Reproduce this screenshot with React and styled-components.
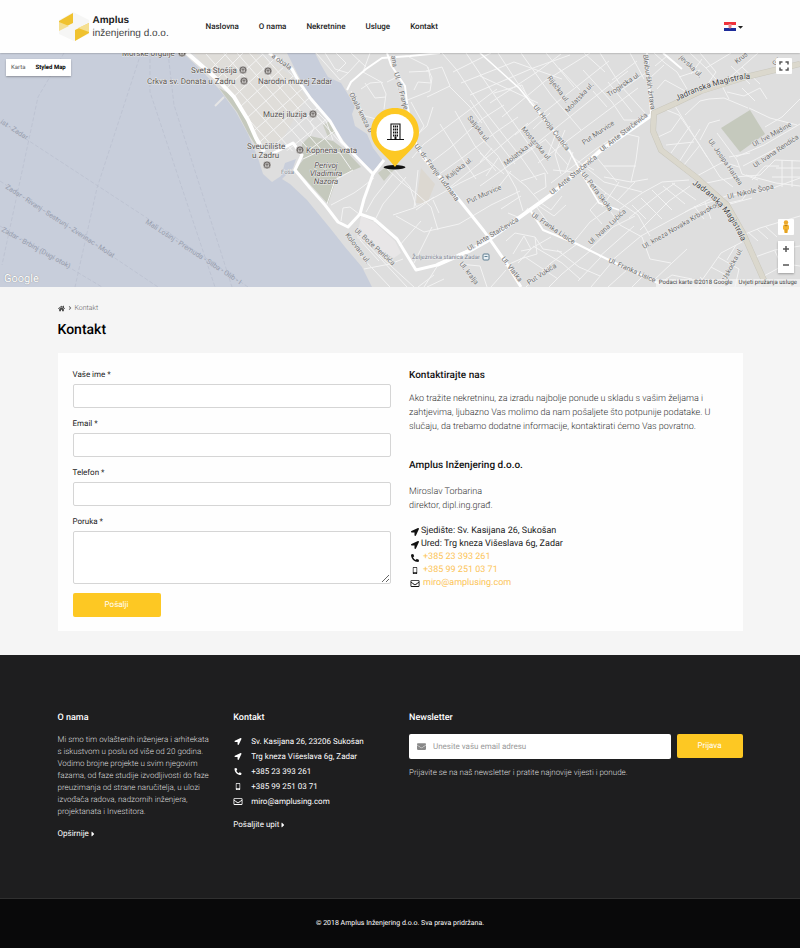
import React from "react";
import styled, { createGlobalStyle } from "styled-components";
import {
    FaAngleRight,
    FaCaretDown,
    FaCaretRight,
    FaEnvelope,
    FaHome,
    FaLocationArrow,
    FaMobileAlt,
    FaPhoneAlt,
    FaRegEnvelope,
} from "react-icons/fa";

const navItems = ["Naslovna", "O nama", "Nekretnine", "Usluge", "Kontakt"];

const fields = [
    { id: "name", label: "Vaše ime *", type: "text" },
    { id: "email", label: "Email *", type: "email" },
    { id: "phone", label: "Telefon *", type: "tel" },
];

const waterLabels = [
    [0, 123, 33, "ist - Zadar"],
    [5, 188, 33, "Zadar - Rivanj - Sestrunj - Zverinac - Molat"],
    [1, 231, 29, "Zadar - Brbinj (Dugi otok)"],
    [145, 223, 33, "Mali Lošinj - Premuda - Silba - Olib - I"],
];

const streetLabels = [
    [271, 57, 35, "a obala"],
    [349, 94, 63, "Obala kneza b"],
    [391, 56, 80, "ana"],
    [394, 73, 75, "Ul. dr. Franje"],
    [414, 146, 53, "Ul. dr. Franje Tuđmana"],
    [448, 180, -38, "Kaljska ul."],
    [467, 118, 52, "Saljska ul."],
    [468, 204, -24, "Put Murvice"],
    [469, 251, -31, "Ul. Ante Starčevića"],
    [354, 231, 42, "Ul. Bože Peričića"],
    [345, 235, 53, "Kolovare ul."],
    [459, 264, 52, "Ul. kralja"],
    [547, 78, 53, "Riječka ul."],
    [568, 113, -47, "Molatska ul."],
    [609, 97, -34, "Trogirska ul."],
    [643, 55, 82, "Bleiburških žrtava"],
    [533, 107, 53, "Ul. Hrvoja Ćustića"],
    [521, 129, 50, "Mostarska ul."],
    [584, 145, -34, "Put Murvice"],
    [602, 152, -38, "Ul. Ante Starčevića"],
    [506, 166, -38, "Molatska ul."],
    [552, 195, -39, "Ul. Ante Starčevića"],
    [581, 174, 53, "Ul. Petra Skoka"],
    [591, 245, -43, "Ul. Ivana Lučića"],
    [531, 216, 34, "Ul. Franka Lisice"],
    [608, 262, 24, "Ul. Franka Lisice"],
    [644, 249, -30, "Ul. kneza Novaka Krbavskog"],
    [708, 141, 55, "Ul. Josipa Hatzea"],
    [754, 147, -29, "Ul. Ive Mašine"],
    [755, 168, -34, "Ul. Ivana Rendića"],
    [728, 199, -13, "Ul. Nikole Šopa"],
    [529, 285, -33, "Put Vukića"],
    [501, 259, 52, "Ul. Vlatka"],
    [726, 281, -62, "Uskočka ul."],
    [679, 58, 44, "jevska ul."],
    [737, 64, -38, "Kruš"],
    [776, 66, -60, "Ga"],
];

const places = [
    [122, 56, "Morske orgulje"],
    [191, 73, "Sveta Stošija"],
    [147, 84, "Crkva sv. Donata u Zadru"],
    [258, 84, "Narodni muzej Zadar"],
    [263, 117, "Muzej iluzija"],
    [247, 149, "Sveučilište"],
    [252, 158, "u Zadru"],
    [306, 153, "Kopnena vrata"],
];

const markers = [[182, 53], [243, 70], [244, 81], [268, 71], [313, 114], [300, 150], [267, 165]];

const CityMap = () => (
    <MapSvg viewBox="0 53 800 234" preserveAspectRatio="xMidYMid slice" role="img" aria-label="Zadar">
        <defs>
            <clipPath id="oldTown">
                <path d="M190 53H262L291 73L310 100L330 124L343 146L300 152L262 148L254 128L236 98L213 77Z" />
            </clipPath>
            <path id="magistralaNorth" d="M677 101Q706 86 744 79H790" />
            <path id="magistralaSouth" d="M692 184Q724 204 739 236L760 280" />
        </defs>

        <rect y="53" width="800" height="234" fill="#c8cedb" />
        <path
            d="M183 53L203 72L219 89L236 112L248 134L258 158L263 174L272 182L281 176L285 163L296 159L293 168L282 179L290 184L307 200L330 228L345 247L362 267L372 287H800V53H315L321 65L328 77L341 83L355 106L352 114L355 126L367 134L373 148L383 161L373 171L353 154L337 131L323 111L308 93L297 73L287 53Z"
            fill="#dedede"
        />
        <path d="M194 53H256L292 76L306 98L282 140L263 148L254 128L236 98L213 77Z" fill="#dfddd9" />
        <path d="M219 88L228 93L244 111L253 131L258 149L249 135L237 112Z" fill="#c5c9bd" />
        <path d="M302 144L310 136L333 141L345 150L361 167L337 177L328 204L296 169L303 160Z" fill="#c5c9bd" />
        <path d="M323 125L330 121L336 132L328 137Z M378 173L387 166L400 164L390 174L384 181Z" fill="#c9ccc1" />
        <path d="M721 128L750 110L765 134L740 152Z" fill="#c5c9bd" />
        <path d="M421 168L435 184L427 204L416 203Z" fill="#dcd8d1" />
        <path d="M361 216L374 222L395 241L401 253L394 258L357 238Z" fill="#e8e6e7" />

        <g fill="none" stroke="#b9bfce" strokeWidth="0.700" strokeDasharray="4 2">
            <path d="M64 53L38 97L2 265M141 53L97 188L75 287M150 53V92L215 287M168 53L174 105L232 287" />
            <path d="M0 122L147 218L248 287M0 181L158 287M0 226L102 287" />
        </g>

        <g fill="none" stroke="#f3f3f3" strokeWidth="1">
            <g clipPath="url(#oldTown)">
                <path d="M190 90L250 30M195 101L265 31M203 110L278 40M210 119L287 47M217 128L297 55M225 138L302 68M233 149L310 82M244 156L317 91M255 162L324 102M269 165L333 114M284 169L340 127" />
                <path d="M214 42L318 160M224 38L330 160M238 40L340 156M252 42L345 148M206 54L304 164M198 62L288 164M262 42L346 134" />
            </g>
            <path d="M310 136L314 128L310 122L318 113L326 121L333 140M303 159L324 149L340 153L351 169M327 204L335 180L353 170M331 205L354 193L361 188L374 178" />
            <path d="M341 221L343 208L350 207L359 214M366 212L374 198L393 174M374 222L383 204L406 177M416 206L410 187L393 168M438 230L431 207L417 194L400 181L384 166" />
            <path d="M393 215L414 208L437 196L460 183L491 168M396 216L424 232L459 224L491 205L520 191M414 208L418 170M434 197L416 210M433 200L439 213M421 221L399 246M432 227L414 263" />
            <path d="M357 252L390 287M367 244L407 287M379 255L414 287M360 240L379 261M364 269L390 264L403 259M424 287L438 265M427 287L444 279M459 264L480 266L487 287M418 287L434 275" />
            <path d="M316 53L340 80L348 73L360 60M325 53L335 69L348 73M351 53L366 67M336 53L346 63L337 72M361 89L370 83L381 82L386 94L384 109M351 91L365 116L376 119M365 83L375 98L386 97" />
            <path d="M370 53L363 72L383 83M397 77L387 82M405 101L430 91L432 78L427 66L409 57M409 72L430 71M414 90L418 82L431 83L428 67M427 97L450 86L442 67L426 71M411 102L424 126L417 136M433 107L427 126L418 134" />
            <path d="M412 158L424 144L468 111L497 89M420 148L407 143M429 164L450 148L482 119L504 105M438 175L462 158L496 132L518 117M449 188L486 158L528 123M440 124L461 157L476 179M455 111L475 146L496 171M470 100L494 137L515 164M449 86L470 107L482 123" />
            <path d="M442 53L456 69L480 105L523 160L537 180M466 53L493 93L536 155L548 174M498 53L517 82L534 104L570 150L583 176M521 53L551 95L581 130M546 53L574 87M453 72L491 53M461 83L514 62L562 79M470 95L533 68L570 55" />
            <path d="M480 76L538 103M494 93L522 85L530 103M490 103L537 72L561 54M502 117L545 81L590 53M515 135L561 99L609 61M527 151L592 99L628 71M538 163L575 135L638 88M551 183L596 149L646 116" />
            <path d="M550 113L533 129M583 70L612 102L624 120H646M600 53L621 86L646 114M630 53L644 79M593 91L607 107M608 82L632 112M580 90L559 68M605 72L584 53M612 80L637 61M620 91L650 70" />
            <path d="M480 137L498 156L506 170L526 186L541 203M492 148L480 162M498 158L486 176M511 171L496 190M480 186L508 166L546 139M504 174L480 153M521 181L545 173L546 187L534 194M553 170L574 172L583 164L594 170" />
            <path d="M545 139L568 165M556 133L547 158M565 130L555 154L561 174M573 152L565 173M506 170L516 188L523 211M521 196L501 209M528 208L520 218L508 213M536 204L554 216L566 205M536 206L549 224M541 203L551 210L562 196" />
            <path d="M603 148L623 133L639 137L636 160L631 182M604 166H636M604 177L631 182L648 179M574 158L604 182L642 192M581 173L606 193L638 215L650 236M598 159L617 182M606 193L590 210L602 224M619 182L602 207M635 182L617 201" />
            <path d="M620 209L642 193L662 182L689 180M629 218L658 195L675 183M640 230L669 201L690 186M632 205L646 219M641 198L662 219M652 190L672 210M663 186L685 204M672 183L696 200M611 212L620 225L642 237L650 259" />
            <path d="M572 244L590 222L607 210M588 251L613 227L635 216M599 257L634 226M610 262L641 236L691 209L729 195M551 237L532 248L518 263M577 244L551 263L526 287M590 251L562 274L549 287M601 257L578 281M612 262L591 287M628 269L608 287M643 276L632 287" />
            <path d="M506 241L515 233L535 237L543 249L562 252M513 254L524 236L531 249L521 251M535 237L537 254L520 259M491 287L506 270M505 266L525 257L558 279M533 246L562 263L580 279M557 250L579 267L600 276" />
            <path d="M664 109L679 115L699 144L720 177L733 187M675 106L707 157M685 115L700 101L709 99L724 98L748 108M681 117L671 131L658 137M690 126L671 153M700 129L679 162M700 145L684 165M694 142L666 145M720 120L709 123L700 140" />
            <path d="M690 53L706 68L731 53M700 53L716 72L705 88M706 68L722 86L729 99M722 84L742 67L758 53M742 67L760 84M731 66L750 84M679 77L700 70M687 89L677 72L665 63L654 53M664 65L650 78M657 89L665 80L685 91" />
            <path d="M655 66L667 56M702 59L691 74M727 92L744 96L760 88L767 99M742 88L755 101M749 108L770 118L797 125M765 127L782 117L800 99M717 133L737 160L742 174L758 180M736 157L764 145L800 124M743 166L781 146M729 157L750 153" />
            <path d="M697 176L723 162L739 167M702 184L735 177L760 175L775 160L800 161M746 175L776 183L800 186M776 168H800M772 177H800M782 160V187M792 160V187M752 180L765 166L779 166M730 195L765 191L800 178M751 188L742 200L724 204" />
            <path d="M685 212L710 199M694 206L704 219M705 202L711 219M730 204L752 198M743 235L760 228L800 216M748 232L758 241M757 229L768 239M765 226L777 237M742 242L721 253L712 266L697 287M736 245L727 260M718 257L739 269L735 287M711 267L728 276M700 277L711 287" />
            <path d="M755 257L775 250L800 246M764 276L786 264L800 266M775 251L782 267M653 281L672 263L687 249M659 284L672 275L692 279M650 259L671 263" />
        </g>

        <g fill="none" stroke="#ffffff" strokeLinejoin="round">
            <path d="M187 53L202 66L218 80L234 97L248 120L256 138L264 152" strokeWidth="4" />
            <path d="M215 106L224 97" stroke="#e6e6e6" strokeWidth="2" />
            <path d="M269 53L292 69L299 82L311 99L330 121L342 142L373 174L364 199L360 214L348 227L338 222L325 205L310 188L295 170L302 155L293 143L266 157" strokeWidth="3" />
            <path d="M373 174L384 160M360 214L374 219L397 239L408 257L416 270L437 265L470 250" strokeWidth="3" />
            <path d="M347 90L351 82L366 69L382 58L410 56L440 53" strokeWidth="2" />
            <path d="M387 53L391 65L405 86L407 103L414 139L423 157" strokeWidth="2" />
            <path d="M423 157L460 201L484 231L505 261L521 287" strokeWidth="3" />
            <path d="M437 265L469 251L487 241L520 217L552 194L600 151L653 114" strokeWidth="4" />
            <path d="M647 53L651 113M663 53L682 69" strokeWidth="2" />
            <path d="M530 210L543 230L577 244L611 261L660 284" strokeWidth="2" />
            <path d="M480 53L519 88L549 125L570 152L583 176L599 203L619 210" strokeWidth="1.500" />
        </g>
        <path d="M800 64L746 77L701 91L674 104L654 113L653 131L661 150L697 178L727 205L743 233L767 287" fill="none" stroke="#c9c7bd" strokeWidth="6" />
        <path d="M800 64L746 77L701 91L674 104L654 113L653 131L661 150L697 178L727 205L743 233L767 287" fill="none" stroke="#dbd8cd" strokeWidth="5" />

        <WaterText>
            {waterLabels.map(([x, y, angle, text]) => (
                <text key={text} transform={`translate(${x} ${y}) rotate(${angle})`}>{text}</text>
            ))}
        </WaterText>
        <StreetText>
            {streetLabels.map(([x, y, angle, text]) => (
                <text key={`${text}${x}`} transform={`translate(${x} ${y}) rotate(${angle})`}>{text}</text>
            ))}
        </StreetText>
        <SmallText>
            <text x="281" y="174">Foša</text>
            <text x="480" y="259" textAnchor="end">Željeznička stanica Zadar</text>
        </SmallText>
        <HighwayText>
            <text><textPath href="#magistralaNorth">Jadranska Magistrala</textPath></text>
            <text><textPath href="#magistralaSouth">Jadranska Magistrala</textPath></text>
        </HighwayText>
        <PlaceText>
            {places.map(([x, y, text]) => <text key={text} x={x} y={y}>{text}</text>)}
        </PlaceText>
        <ParkText>
            <text x="326" y="168">Perivoj</text>
            <text x="326" y="176">Vladimira</text>
            <text x="326" y="184">Nazora</text>
        </ParkText>
        {markers.map(([x, y]) => (
            <g key={`${x}-${y}`}>
                <circle cx={x} cy={y} r="4" fill="#6f6a67" stroke="#eeeeee" strokeWidth="0.600" />
                <path d={`M${x - 2.3} ${y + 1.8}h4.600M${x - 1.5} ${y + 1.2}v-1.500M${x} ${y + 1.2}v-1.500M${x + 1.5} ${y + 1.2}v-1.500M${x - 2.2} ${y - 0.6}l2.200 -1.600l2.200 1.600`} fill="none" stroke="#fff" strokeWidth="0.600" />
            </g>
        ))}
        <rect x="483" y="254" width="6" height="6" rx="1" fill="#eaf1f5" stroke="#5f7f92" />
        <path d="M484.500 256.500h3" stroke="#5f7f92" />

        <ellipse cx="394.500" cy="167.300" rx="11" ry="2.200" fill="#111" />
        <path d="M395 108C381 108 371 118.500 371 132C371 147 386 154 395 167C404 154 419 147 419 132C419 118.500 409 108 395 108Z" fill="#fdc823" />
        <circle cx="395" cy="132.500" r="18.500" fill="#fff" />
        <path d="M391 139V124H400V139M387 139.500H404" fill="none" stroke="#111" strokeWidth="1.100" />
        <path d="M393 126.500h5M393 129.500h5M393 132.500h5M393 135.500h5" stroke="#111" strokeWidth="1.800" strokeDasharray="1.300 0.550" />
        <path d="M394.500 136.500h2v3h-2z" fill="#111" />
    </MapSvg>
);

const Logo = () => (
    <LogoSvg viewBox="0 0 32 30" aria-hidden="true">
        <path d="M1 8L15 0L31 8V22L16 29L1 22Z" fill="#f6f6f5" />
        <path d="M1 9L15 1V11L1 18Z" fill="#f0c22f" />
        <path d="M1 10V19L11 14Z" fill="#f5df91" />
        <path d="M17 18L31 11V21L17 29Z" fill="#f0c22f" />
        <path d="M20 16L31 11V20Z" fill="#f5df91" />
    </LogoSvg>
);

const Flag = () => (
    <FlagSvg viewBox="0 0 12 9" aria-hidden="true">
        <path d="M0 0h12v9H0z" fill="#fff" />
        <path d="M0 0h12v3H0z" fill="#f0323c" />
        <path d="M0 6h12v3H0z" fill="#1d2c9a" />
        <path d="M4.500 2h3v3.500l-1.500 1.200l-1.500 -1.200z" fill="#e8868c" />
    </FlagSvg>
);

const Pegman = () => (
    <svg width="8" height="14" viewBox="0 0 8 14" aria-hidden="true">
        <circle cx="4" cy="2.500" r="2.200" fill="#eda92b" />
        <path d="M1 6L2 4.500H6L7 6V9.500H6L5.500 13H2.500L2 9.500H1z" fill="#f3b32e" />
        <path d="M2 5h4l-2 1.500zM3.700 9h0.600v4h-0.600z" fill="#bb7c17" />
    </svg>
);

const App = () => {
    return (
        <>
            <GlobalStyle />
            <StHeader>
                <StHeaderInner>
                    <StBrand href="#">
                        <Logo />
                        <span>
                            <StBrandName>Amplus</StBrandName>
                            <StBrandSub>inženjering d.o.o.</StBrandSub>
                        </span>
                    </StBrand>
                    <StNav>
                        {navItems.map((item) => <a key={item} href="#">{item}</a>)}
                    </StNav>
                    <StLanguage type="button" aria-label="Jezik">
                        <Flag />
                        <StCaret size={8} />
                    </StLanguage>
                </StHeaderInner>
            </StHeader>

            <StMap>
                <CityMap />
                <StMapTypes>
                    <StMapType type="button">Karta</StMapType>
                    <StMapType type="button" $active>Styled Map</StMapType>
                </StMapTypes>
                <StFullscreen type="button" aria-label="Cijeli zaslon">
                    <svg width="10" height="10" viewBox="0 0 10 10" fill="none" stroke="#555" strokeWidth="1.500">
                        <path d="M1 3.500V1H3.500M6.500 1H9V3.500M9 6.500V9H6.500M3.500 9H1V6.500" />
                    </svg>
                </StFullscreen>
                <StMapTools>
                    <StTool type="button" aria-label="Street View"><Pegman /></StTool>
                    <StZoom>
                        <StTool type="button" aria-label="Povećaj">
                            <svg width="6" height="6" viewBox="0 0 6 6" stroke="#555" strokeWidth="1.500"><path d="M0 3h6M3 0v6" /></svg>
                        </StTool>
                        <StTool type="button" aria-label="Smanji">
                            <svg width="6" height="6" viewBox="0 0 6 6" stroke="#555" strokeWidth="1.500"><path d="M0 3h6" /></svg>
                        </StTool>
                    </StZoom>
                </StMapTools>
                <StGoogle>Google</StGoogle>
                <StMapCredits>
                    <span>Podaci karte ©2018 Google</span>
                    <a href="#">Uvjeti pružanja usluge</a>
                </StMapCredits>
            </StMap>

            <StMain>
                <StContainer>
                    <StBreadcrumb>
                        <a href="#" aria-label="Naslovna"><FaHome size={7} /></a>
                        <FaAngleRight size={6} />
                        <span>Kontakt</span>
                    </StBreadcrumb>
                    <StTitle>Kontakt</StTitle>
                    <StCard>
                        <StForm onSubmit={(e) => e.preventDefault()}>
                            {fields.map(({ id, label, type }) => (
                                <StField key={id}>
                                    <label htmlFor={id}>{label}</label>
                                    <StInput id={id} type={type} />
                                </StField>
                            ))}
                            <StField>
                                <label htmlFor="message">Poruka *</label>
                                <StTextarea id="message" />
                            </StField>
                            <StSubmit>Pošalji</StSubmit>
                        </StForm>
                        <div>
                            <StSubtitle>Kontaktirajte nas</StSubtitle>
                            <StLead>
                                Ako tražite nekretninu, za izradu najbolje ponude u skladu s vašim željama i
                                zahtjevima, ljubazno Vas molimo da nam pošaljete što potpunije podatake. U
                                slučaju, da trebamo dodatne informacije, kontaktirati ćemo Vas povratno.
                            </StLead>
                            <StCompany>Amplus Inženjering d.o.o.</StCompany>
                            <StLead>
                                Miroslav Torbarina<br />
                                direktor, dipl.ing.građ.
                            </StLead>
                            <StDetails>
                                <li><FaLocationArrow size={8} />Sjedište: Sv. Kasijana 26, Sukošan</li>
                                <li><FaLocationArrow size={8} />Ured: Trg kneza Višeslava 6g, Zadar</li>
                                <li><FaPhoneAlt size={8} /><a href="tel:+38523393261">+385 23 393 261</a></li>
                                <li><FaMobileAlt size={7} /><a href="tel:+385992510371">+385 99 251 03 71</a></li>
                                <li><FaRegEnvelope size={9} /><a href="mailto:miro@amplusing.com">miro@amplusing.com</a></li>
                            </StDetails>
                        </div>
                    </StCard>
                </StContainer>
            </StMain>

            <StFooter>
                <StFooterGrid>
                    <div>
                        <StFooterTitle>O nama</StFooterTitle>
                        <StAbout>
                            Mi smo tim ovlaštenih inženjera i arhitekata s iskustvom u poslu od više od 20 godina.
                            Vodimo brojne projekte u svim njegovim fazama, od faze studije izvodljivosti do faze
                            preuzimanja od strane naručitelja, u ulozi izvođača radova, nadzornih inženjera,
                            projektanata i Investitora.
                        </StAbout>
                        <StMore href="#">Opširnije<FaCaretRight size={8} /></StMore>
                    </div>
                    <div>
                        <StFooterTitle>Kontakt</StFooterTitle>
                        <StFooterList>
                            <li><FaLocationArrow size={7} />Sv. Kasijana 26, 23206 Sukošan</li>
                            <li><FaLocationArrow size={7} />Trg kneza Višeslava 6g, Zadar</li>
                            <li><FaPhoneAlt size={7} />+385 23 393 261</li>
                            <li><FaMobileAlt size={7} />+385 99 251 03 71</li>
                            <li><FaRegEnvelope size={9} />miro@amplusing.com</li>
                        </StFooterList>
                        <StMore href="#">Pošaljite upit<FaCaretRight size={8} /></StMore>
                    </div>
                    <StNewsletter>
                        <StFooterTitle>Newsletter</StFooterTitle>
                        <StSubscribe onSubmit={(e) => e.preventDefault()}>
                            <StEmailBox>
                                <FaEnvelope size={9} />
                                <input type="email" aria-label="Email adresa" placeholder="Unesite vašu email adresu" />
                            </StEmailBox>
                            <StJoin>Prijava</StJoin>
                        </StSubscribe>
                        <p>Prijavite se na naš newsletter i pratite najnovije vijesti i ponude.</p>
                    </StNewsletter>
                </StFooterGrid>
                <StCopyright>© 2018 Amplus Inženjering d.o.o. Sva prava pridržana.</StCopyright>
            </StFooter>
        </>
    );
};

export default App;

const GlobalStyle = createGlobalStyle`
    * {
        box-sizing: border-box;
    }
    body {
        margin: 0;
        background-color: #f5f5f5;
        color: #222;
        font-family: Roboto, sans-serif;
        font-size: 8px;
        line-height: 12px;
        text-rendering: geometricPrecision;
    }
    h1, h2, h3, p, ul {
        margin: 0;
        padding: 0;
    }
    ul {
        list-style: none;
    }
    a {
        color: inherit;
        text-decoration: none;
    }
    button, input, textarea {
        font: inherit;
        text-rendering: inherit;
    }
    button {
        padding: 0;
        border: 0;
        cursor: pointer;
    }
`;

const StContainer = styled.div`
    width: calc(100% - 30px);
    max-width: 685px;
    margin: 0 auto;
`;

const StHeader = styled.header`
    position: relative;
    z-index: 1;
    background-color: #fefefe;
    box-shadow: 0 0 2px rgba(0, 0, 0, 0.4);
`;

const StHeaderInner = styled(StContainer)`
    display: flex;
    align-items: center;
    height: 53px;
`;

const StBrand = styled.a`
    display: flex;
    align-items: center;
    gap: 3px;
    width: 148px;
    color: #222;
    font-family: "Liberation Sans", Arial, sans-serif;
    font-size: 10px;
    line-height: 13px;
    white-space: nowrap;
`;

const StBrandName = styled.span`
    display: block;
    font-weight: 700;
`;

const StBrandSub = styled.span`
    display: block;
    color: #444;
`;

const LogoSvg = styled.svg`
    width: 32px;
    height: 30px;
`;

const StNav = styled.nav`
    display: flex;
    gap: 20px;
    font-weight: 500;
`;

const StLanguage = styled.button`
    display: flex;
    align-items: center;
    gap: 2px;
    margin-left: auto;
    background: none;
    color: #222;
`;

const StCaret = styled(FaCaretDown)`
    width: 5px;
`;

const FlagSvg = styled.svg`
    width: 12px;
    height: 9px;
`;

const StMap = styled.section`
    position: relative;
    height: 234px;
    overflow: hidden;
    background-color: #c8cedb;
`;

const MapSvg = styled.svg`
    display: block;
    width: 100%;
    height: 100%;
`;

const WaterText = styled.g`
    fill: #979dad;
    font-size: 7px;
`;

const StreetText = styled.g`
    fill: #707070;
    stroke: #ececec;
    stroke-width: 1px;
    paint-order: stroke;
    font-size: 7px;
`;

const SmallText = styled(StreetText)`
    fill: #7c8592;
    font-size: 6px;
`;

const HighwayText = styled(StreetText)`
    fill: #444;
    font-size: 8px;
`;

const PlaceText = styled(StreetText)`
    fill: #595553;
    font-size: 8px;
`;

const ParkText = styled(PlaceText)`
    font-style: italic;
    text-anchor: middle;
`;

const StMapTypes = styled.div`
    position: absolute;
    top: 6px;
    left: 6px;
    display: flex;
    box-shadow: 0 1px 2px rgba(0, 0, 0, 0.3);
    border-radius: 1px;
`;

const StMapType = styled.button`
    height: 17px;
    padding: 0 5px;
    background-color: #fff;
    color: ${({ $active }) => ($active ? "#000" : "#565656")};
    font-size: 6px;
    font-weight: ${({ $active }) => ($active ? 700 : 400)};
`;

const StTool = styled.button`
    display: flex;
    align-items: center;
    justify-content: center;
    width: 16px;
    height: 16px;
    border-radius: 1px;
    background-color: #fff;
`;

const StFullscreen = styled(StTool)`
    position: absolute;
    top: 5px;
    right: 8px;
`;

const StMapTools = styled.div`
    position: absolute;
    right: 6px;
    bottom: 14px;
    display: flex;
    flex-direction: column;
    gap: 6px;
`;

const StZoom = styled.div`
    background-color: #fff;
    box-shadow: 0 1px 2px rgba(0, 0, 0, 0.3);
`;

const StGoogle = styled.span`
    position: absolute;
    left: 4px;
    bottom: 2px;
    color: #fff;
    font-size: 11px;
    text-shadow: 0 0 1px #777;
`;

const StMapCredits = styled.div`
    position: absolute;
    right: 0;
    bottom: 0;
    display: flex;
    gap: 6px;
    padding: 0 3px;
    background-color: rgba(245, 245, 245, 0.7);
    color: #444;
    font-size: 6px;
    line-height: 8px;
`;

const StMain = styled.main`
    padding: 15px 0 24px;
`;

const StBreadcrumb = styled.nav`
    display: flex;
    align-items: center;
    gap: 2px;
    color: #666;
    font-size: 7px;
    font-weight: 300;

    a {
        display: flex;
        color: #444;
    }
`;

const StTitle = styled.h1`
    margin: 7px 0 14px;
    color: #000;
    font-size: 14px;
    font-weight: 500;
    line-height: 18px;
`;

const StCard = styled.div`
    display: grid;
    grid-template-columns: 1fr 1fr;
    gap: 18px;
    padding: 15px 15px 14px;
    background-color: #fefefe;
`;

const StForm = styled.form`
    display: flex;
    flex-direction: column;
    gap: 9px;
`;

const StField = styled.div`
    display: flex;
    flex-direction: column;
    gap: 3px;
    line-height: 13px;
`;

const StInput = styled.input`
    width: 100%;
    height: 24px;
    padding: 0 8px;
    border: 1px solid #d5d5d5;
    border-radius: 2px;
    background-color: #fff;
`;

const StTextarea = styled.textarea`
    width: 100%;
    height: 53px;
    padding: 8px;
    border: 1px solid #d5d5d5;
    border-radius: 2px;
    background-color: #fff;
`;

const StSubmit = styled.button`
    width: 88px;
    height: 24px;
    border-radius: 2px;
    background-color: #fdc823;
    color: #fff;
`;

const StSubtitle = styled.h2`
    margin-bottom: 8px;
    color: #111;
    font-size: 10px;
    font-weight: 500;
    line-height: 16px;
`;

const StCompany = styled(StSubtitle)`
    margin: 24px 0 11px;
`;

const StLead = styled.p`
    color: #333;
    font-size: 9px;
    font-weight: 300;
    line-height: 14px;
`;

const StDetails = styled.ul`
    margin-top: 12px;
    font-size: 9px;
    line-height: 13px;

    li {
        display: flex;
        align-items: center;
    }
    svg {
        width: 12px;
        color: #111;
    }
    a {
        margin-left: 2px;
        color: #fcc457;
    }
`;

const StFooter = styled.footer`
    background-color: #1e1e1f;
    color: #fff;
`;

const StFooterGrid = styled(StContainer)`
    display: grid;
    grid-template-columns: repeat(4, 1fr);
    gap: 18px;
    min-height: 243px;
    padding: 55px 0;
`;

const StFooterTitle = styled.h3`
    margin-bottom: 8px;
    font-size: 9px;
    font-weight: 500;
    line-height: 16px;
`;

const StAbout = styled.p`
    padding-right: 2px;
    color: #ddd;
    font-weight: 300;
`;

const StFooterList = styled.ul`
    line-height: 15px;

    li {
        display: flex;
        align-items: center;
        gap: 8px;
    }
    svg {
        width: 10px;
    }
`;

const StMore = styled.a`
    display: flex;
    align-items: center;
    margin-top: 10px;
`;

const StNewsletter = styled.div`
    grid-column: span 2;

    p {
        margin-top: 8px;
        color: #ddd;
        font-weight: 300;
    }
`;

const StSubscribe = styled.form`
    display: flex;
    gap: 6px;
`;

const StEmailBox = styled.div`
    display: flex;
    flex: 1;
    align-items: center;
    gap: 7px;
    height: 25px;
    padding: 0 8px;
    border-radius: 2px;
    background-color: #fff;
    color: #888;

    input {
        flex: 1;
        min-width: 0;
        padding: 0;
        border: 0;
        outline: 0;
        background: none;
    }
    input::placeholder {
        color: #999;
    }
`;

const StJoin = styled(StSubmit)`
    width: 66px;
`;

const StCopyright = styled.div`
    height: 50px;
    border-top: 1px solid #303030;
    background-color: #09090a;
    font-size: 7px;
    line-height: 49px;
    text-align: center;
`;
